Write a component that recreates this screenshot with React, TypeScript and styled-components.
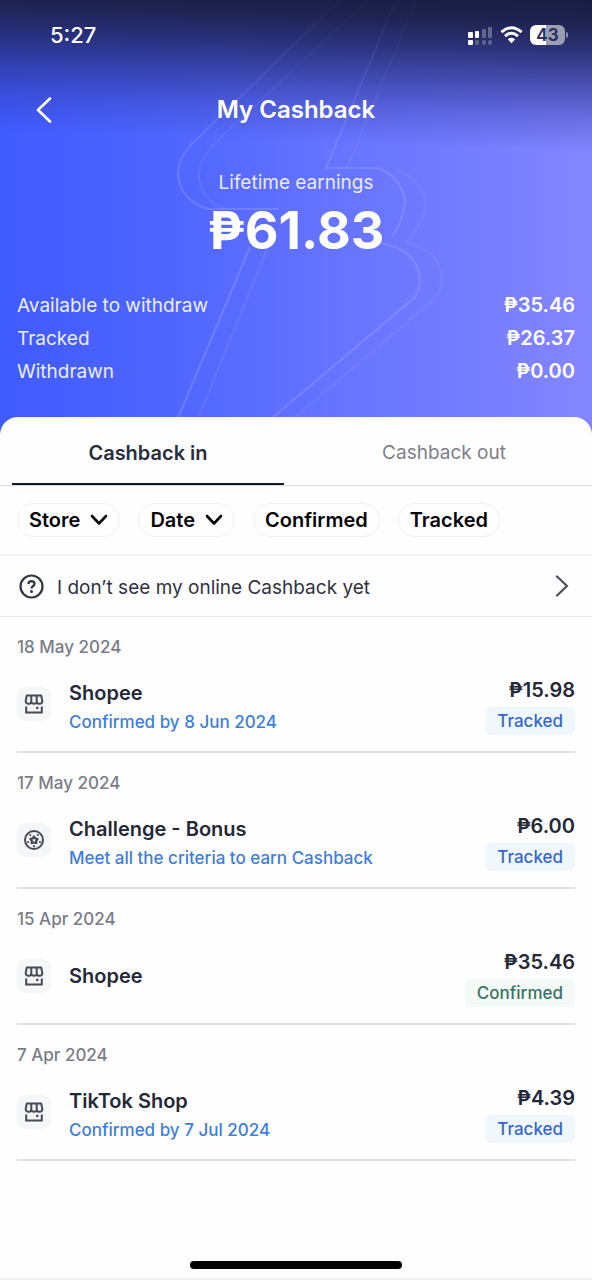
import React from "react";
import styled, { createGlobalStyle } from "styled-components";

const GlobalStyle = createGlobalStyle`
  *, *::before, *::after { box-sizing: border-box; }
  body {
    margin: 0;
    background: #fefefe;
    color: #252936;
    font-family: Inter, "Liberation Sans", sans-serif;
    font-size: 19px;
    line-height: 24px;
  }
  button { font: inherit; color: inherit; background: none; border: 0; padding: 0; cursor: pointer; }
  h1, h2, p, dl, dd, dt { margin: 0; padding: 0; }
  svg { display: block; flex: none; }
`;

const Screen = styled.div`
  min-height: 100vh;
  display: flex;
  flex-direction: column;
`;

const Hero = styled.header`
  position: relative;
  padding-bottom: 45px;
  color: #fff;
  overflow: hidden;
  background:
    linear-gradient(182deg, #1a1d40 0, #1f2350 24px, rgba(35, 41, 104, 0.9) 50px, rgba(41, 48, 130, 0.64) 84px, rgba(48, 56, 160, 0.34) 116px, rgba(64, 72, 220, 0) 152px),
    linear-gradient(90deg, #3f5aff 0%, #5167fe 32%, #6573ff 55%, #747cff 78%, #8486ff 100%);
`;

const BoltArt = styled.svg`
  position: absolute;
  top: 0;
  left: 50%;
  margin-left: -296px;
`;

const HeroContent = styled.div`
  position: relative;
`;

const StatusBar = styled.div`
  display: flex;
  align-items: center;
  justify-content: space-between;
  height: 70px;
  padding: 0 24px 0 50px;
`;

const Clock = styled.time`
  font-size: 22px;
  font-weight: 500;
`;

const StatusIcons = styled.div`
  display: flex;
  align-items: center;
  gap: 7px;
`;

const BatteryWrap = styled.div`
  display: flex;
  align-items: center;
  gap: 1px;
`;

const Battery = styled.div`
  width: 35px;
  height: 20px;
  border-radius: 6px;
  background: linear-gradient(90deg, #fff 45%, #9b9eb2 45%);
  color: #2b3063;
  font-size: 17px;
  font-weight: 700;
  line-height: 20px;
  text-align: center;
`;

const BatteryTip = styled.div`
  width: 2px;
  height: 6px;
  border-radius: 0 2px 2px 0;
  background: #8d90b0;
`;

const TitleBar = styled.div`
  display: grid;
  grid-template-columns: 56px 1fr 56px;
  align-items: center;
  height: 79px;
  padding: 0 16px;
`;

const BackButton = styled.button`
  width: 56px;
  height: 48px;
  display: grid;
  place-items: center;
`;

const Title = styled.h1`
  font-size: 24px;
  line-height: 32px;
  font-weight: 600;
  text-align: center;
`;

const Earnings = styled.div`
  padding-top: 22px;
  text-align: center;
`;

const EarningsLabel = styled.p`
  color: #e9ebff;
`;

const EarningsTotal = styled.p`
  font-size: 52px;
  line-height: 60px;
  font-weight: 700;
  margin-top: 6px;
`;

const Balances = styled.dl`
  padding: 28px 17px 0;
`;

const BalanceRow = styled.div`
  display: flex;
  justify-content: space-between;
  line-height: 33px;
  dt { color: #eceeff; }
  dd { font-size: 20px; font-weight: 600; }
`;

const Sheet = styled.main`
  position: relative;
  margin-top: -16px;
  flex: 1;
  display: flex;
  flex-direction: column;
  background: #fefefe;
  border-radius: 18px 18px 0 0;
`;

const Tabs = styled.div`
  display: grid;
  grid-template-columns: 1fr 1fr;
  column-gap: 24px;
  padding: 0 12px;
  height: 69px;
  border-bottom: 1px solid #d9dae2;
`;

const Tab = styled.button<{ $active?: boolean }>`
  padding-top: 6px;
  border-bottom: 2px solid ${(p) => (p.$active ? "#14162a" : "transparent")};
  font-size: ${(p) => (p.$active ? "20px" : "19px")};
  font-weight: ${(p) => (p.$active ? 600 : 400)};
  color: ${(p) => (p.$active ? "#292d3b" : "#7d808a")};
`;

const Filters = styled.div`
  display: flex;
  gap: 18px;
  padding: 17px;
  height: 70px;
  border-bottom: 2px solid #f4f4f5;
`;

const Chip = styled.button`
  display: flex;
  align-items: center;
  gap: 10px;
  height: 34px;
  padding: 0 11px;
  border: 1px solid #eff0f1;
  border-radius: 17px;
  color: #050507;
  font-size: 20px;
  font-weight: 600;
  white-space: nowrap;
`;

const HelpRow = styled.button`
  display: flex;
  align-items: center;
  height: 61px;
  padding: 0 23px 0 19px;
  border-bottom: 1px solid #e8e8ea;
  text-align: left;
  color: #2f3342;
  span { flex: 1; padding-left: 13px; padding-top: 3px; }
`;

const Group = styled.section`
  height: 136px;
  margin: 0 17px;
  padding-top: 18px;
  border-bottom: 2px solid #dedfdf;
`;

const DateHeading = styled.h2`
  font-size: 17px;
  line-height: 24px;
  font-weight: 500;
  color: #7a7d87;
`;

const Entry = styled.div`
  display: flex;
  align-items: center;
  height: 62px;
  margin-top: 14px;
`;

const IconTile = styled.div`
  width: 34px;
  height: 34px;
  margin-right: 18px;
  border-radius: 10px;
  background: #f5f6f7;
  display: grid;
  place-items: center;
`;

const Details = styled.div<{ $withNote: boolean }>`
  flex: 1;
  min-width: 0;
  padding-top: ${(p) => (p.$withNote ? "7px" : "0")};
`;

const Merchant = styled.p`
  font-size: 20px;
  font-weight: 600;
`;

const Note = styled.p`
  margin-top: 5px;
  font-size: 17px;
  font-weight: 500;
  color: #3b7fde;
`;

const Result = styled.div`
  display: flex;
  flex-direction: column;
  align-items: flex-end;
  gap: 5px;
  padding-top: 5px;
`;

const Amount = styled.p`
  font-size: 20px;
  font-weight: 600;
`;

const Badge = styled.span<{ $confirmed?: boolean }>`
  height: 28px;
  padding: 0 12px;
  border-radius: 6px;
  font-size: 17px;
  line-height: 28px;
  font-weight: 500;
  color: ${(p) => (p.$confirmed ? "#397361" : "#3467ce")};
  background: ${(p) => (p.$confirmed ? "#f3f9f7" : "#f1f7ff")};
`;

const Footer = styled.footer`
  margin-top: auto;
  padding: 16px 0 9px;
  border-bottom: 2px solid #f0f0f1;
`;

const HomeIndicator = styled.div`
  width: 212px;
  height: 8px;
  margin: 0 auto;
  border-radius: 4px;
  background: #000;
`;

const boltFront =
  "M340 0 L196 140 Q178 156 178 175 Q181 201 208 209 L278 209 M250 247 L178 418 M396 0 L326 168 L378 168 Q403 178 405 203 Q403 221 392 237 M380 243 Q418 249 420 280 Q419 292 414 298 L272 418";
const boltBack =
  "M368 0 L216 142 Q198 160 199 178 Q202 201 225 209 M268 247 L199 416 M416 0 L347 168 M396 170 Q424 180 426 205 Q424 222 406 243 Q441 249 442 280 Q440 294 433 300 L294 418";

const Bolt = () => (
  <BoltArt width="592" height="430" viewBox="0 0 592 430" fill="none" aria-hidden="true">
    <defs>
      <linearGradient id="boltFade" x1="0" y1="0" x2="0" y2="430" gradientUnits="userSpaceOnUse">
        <stop offset="0" stopColor="#a3abff" stopOpacity="0.02" />
        <stop offset="0.2" stopColor="#a3abff" stopOpacity="0.12" />
        <stop offset="0.42" stopColor="#a3abff" stopOpacity="0.32" />
        <stop offset="1" stopColor="#a3abff" stopOpacity="0.32" />
      </linearGradient>
    </defs>
    <path d={boltFront} stroke="url(#boltFade)" strokeWidth="2" />
    <path d={boltBack} stroke="url(#boltFade)" strokeWidth="2" opacity="0.5" />
  </BoltArt>
);

const Signal = () => (
  <svg width="25" height="19" viewBox="0 0 25 19" aria-hidden="true">
    <g fill="#fff">
      <rect x="0" y="6" width="5" height="6" rx="1" />
      <rect x="7" y="5" width="4" height="7" rx="1" />
      <rect x="0" y="14" width="5" height="5" rx="1" />
    </g>
    <g fill="#62668c">
      <rect x="14" y="3" width="4" height="9" rx="1" />
      <rect x="20" y="1" width="4" height="11" rx="1" />
      <rect x="7" y="14" width="4" height="5" rx="2" />
      <rect x="14" y="14" width="4" height="5" rx="2" />
      <rect x="20" y="14" width="4" height="5" rx="2" />
    </g>
  </svg>
);

const Wifi = () => (
  <svg width="23" height="18" viewBox="0 0 23 18" fill="none" aria-hidden="true">
    <path d="M1.4 6.2 Q11.5 -2.8 21.6 6.2" stroke="#fff" strokeWidth="3" />
    <path d="M5 10.2 Q11.5 4.4 18 10.2" stroke="#fff" strokeWidth="3" />
    <path d="M7.8 13.2 Q11.5 10.2 15.2 13.2 L11.5 17.2 Z" fill="#fff" />
  </svg>
);

const ChevronDown = () => (
  <svg width="18" height="12" viewBox="0 0 18 12" fill="none" aria-hidden="true">
    <path d="M2 2 L9 9.5 L16 2" stroke="#050507" strokeWidth="2.6" strokeLinecap="round" strokeLinejoin="round" />
  </svg>
);

const HelpIcon = () => (
  <svg width="25" height="25" viewBox="0 0 25 25" fill="none" stroke="#303443" aria-hidden="true">
    <circle cx="12.5" cy="12.5" r="11" strokeWidth="2.2" />
    <path d="M9.4 10 Q9.5 7.1 12.5 7.1 Q15.5 7.2 15.5 9.7 Q15.5 11.3 13.8 12.3 Q12.5 13.1 12.5 14.6" strokeWidth="2.3" />
    <circle cx="12.5" cy="17.6" r="1.5" fill="#303443" stroke="none" />
  </svg>
);

const StoreIcon = () => (
  <svg width="20" height="20" viewBox="0 0 20 20" fill="none" stroke="#464a58" strokeWidth="2" aria-hidden="true">
    <path d="M2.8 1.4 H17.2 L18.3 7 Q18.2 9.8 15.6 9.8 Q13.2 9.8 12.8 8.2 Q12.2 9.8 10 9.8 Q7.8 9.8 7.2 8.2 Q6.8 9.8 4.4 9.8 Q1.8 9.8 1.7 7 Z" strokeLinejoin="round" />
    <path d="M7.3 1.3 V8.4 M12.7 1.3 V8.4" />
    <path d="M2.2 12.4 V18.4 H17.8 V12.4" />
    <path d="M13.3 12.8 V15.2" strokeWidth="2.2" />
  </svg>
);

const ChallengeIcon = () => (
  <svg width="20" height="20" viewBox="0 0 20 20" fill="none" stroke="#464a58" aria-hidden="true">
    <circle cx="10" cy="10" r="9" strokeWidth="2" />
    <path d="M10 6.4 L11.2 8.4 L13.6 9 L12.2 10.8 L12.4 13.2 L10 12.5 L7.6 13.2 L7.8 10.8 L6.4 9 L8.8 8.4 Z" strokeWidth="2.2" strokeLinejoin="round" />
    <g fill="#464a58" stroke="none">
      <circle cx="6.2" cy="5" r="1.1" />
      <circle cx="13.8" cy="5" r="1.1" />
      <circle cx="4" cy="12" r="1.1" />
      <circle cx="16" cy="12" r="1.1" />
      <circle cx="10" cy="16.2" r="1.1" />
    </g>
  </svg>
);

type Item = {
  date: string;
  name: string;
  note?: string;
  amount: string;
  status: "Tracked" | "Confirmed";
  icon: "store" | "challenge";
};

const items: Item[] = [
  { date: "18 May 2024", name: "Shopee", note: "Confirmed by 8 Jun 2024", amount: "₱15.98", status: "Tracked", icon: "store" },
  { date: "17 May 2024", name: "Challenge - Bonus", note: "Meet all the criteria to earn Cashback", amount: "₱6.00", status: "Tracked", icon: "challenge" },
  { date: "15 Apr 2024", name: "Shopee", amount: "₱35.46", status: "Confirmed", icon: "store" },
  { date: "7 Apr 2024", name: "TikTok Shop", note: "Confirmed by 7 Jul 2024", amount: "₱4.39", status: "Tracked", icon: "store" },
];

const balances = [
  ["Available to withdraw", "₱35.46"],
  ["Tracked", "₱26.37"],
  ["Withdrawn", "₱0.00"],
];

export default function App() {
  return (
    <Screen>
      <GlobalStyle />
      <Hero>
        <Bolt />
        <HeroContent>
          <StatusBar>
            <Clock>5:27</Clock>
            <StatusIcons>
              <Signal />
              <Wifi />
              <BatteryWrap>
                <Battery>43</Battery>
                <BatteryTip />
              </BatteryWrap>
            </StatusIcons>
          </StatusBar>
          <TitleBar>
            <BackButton aria-label="Back">
              <svg width="16" height="26" viewBox="0 0 16 26" fill="none" aria-hidden="true">
                <path d="M14 1.5 L2 13 L14 24.5" stroke="#fff" strokeWidth="2.6" strokeLinecap="round" strokeLinejoin="round" />
              </svg>
            </BackButton>
            <Title>My Cashback</Title>
          </TitleBar>
          <Earnings>
            <EarningsLabel>Lifetime earnings</EarningsLabel>
            <EarningsTotal>₱61.83</EarningsTotal>
          </Earnings>
          <Balances>
            {balances.map(([label, value]) => (
              <BalanceRow key={label}>
                <dt>{label}</dt>
                <dd>{value}</dd>
              </BalanceRow>
            ))}
          </Balances>
        </HeroContent>
      </Hero>
      <Sheet>
        <Tabs role="tablist">
          <Tab role="tab" aria-selected="true" $active>Cashback in</Tab>
          <Tab role="tab" aria-selected="false">Cashback out</Tab>
        </Tabs>
        <Filters>
          <Chip>Store <ChevronDown /></Chip>
          <Chip>Date <ChevronDown /></Chip>
          <Chip>Confirmed</Chip>
          <Chip>Tracked</Chip>
        </Filters>
        <HelpRow>
          <HelpIcon />
          <span>I don’t see my online Cashback yet</span>
          <svg width="14" height="22" viewBox="0 0 14 22" fill="none" aria-hidden="true">
            <path d="M2 1.5 L12 11 L2 20.5" stroke="#50535f" strokeWidth="2.4" strokeLinecap="round" strokeLinejoin="round" />
          </svg>
        </HelpRow>
        {items.map((item) => (
          <Group key={item.date}>
            <DateHeading>{item.date}</DateHeading>
            <Entry>
              <IconTile>{item.icon === "store" ? <StoreIcon /> : <ChallengeIcon />}</IconTile>
              <Details $withNote={Boolean(item.note)}>
                <Merchant>{item.name}</Merchant>
                {item.note && <Note>{item.note}</Note>}
              </Details>
              <Result>
                <Amount>{item.amount}</Amount>
                <Badge $confirmed={item.status === "Confirmed"}>{item.status}</Badge>
              </Result>
            </Entry>
          </Group>
        ))}
        <Footer>
          <HomeIndicator />
        </Footer>
      </Sheet>
    </Screen>
  );
}
